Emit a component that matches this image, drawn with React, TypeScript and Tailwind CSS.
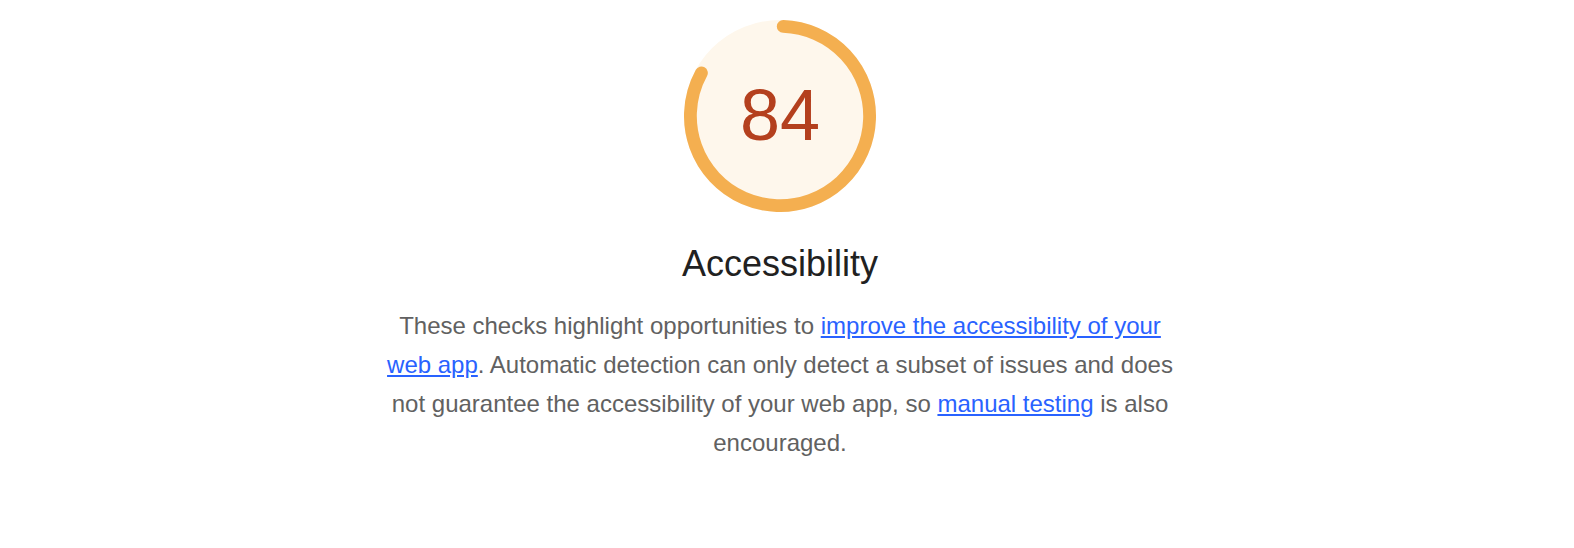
import React from 'react'

const RADIUS = 56
const STROKE = 8

function ScoreGauge({ score }: { score: number }) {
  const circumference = 2 * Math.PI * RADIUS
  // leave a small gap so the round caps don't touch
  const length = Math.max(score * circumference - 0.75 * STROKE, 0)
  const rotate = -90 + ((0.25 * STROKE) / circumference) * 360

  return (
    <div className="relative h-[192px] w-[192px]">
      <svg viewBox="0 0 120 120" className="h-full w-full">
        <circle cx="60" cy="60" r={RADIUS} fill="#fef7ec" stroke="#fef7ec" strokeWidth={STROKE} />
        <circle
          cx="60"
          cy="60"
          r={RADIUS}
          fill="none"
          stroke="#f4af50"
          strokeWidth={STROKE}
          strokeLinecap="round"
          strokeDasharray={`${length} ${circumference}`}
          style={{ transform: `rotate(${rotate}deg)`, transformOrigin: '60px 60px' }}
        />
      </svg>
      <div className="absolute inset-0 flex items-center justify-center pb-[2px] text-[72px] leading-none text-[#b4401e]">
        {Math.round(score * 100)}
      </div>
    </div>
  )
}

export default function App() {
  return (
    <div
      className="min-h-[548px] w-full bg-white pr-[14px]"
      style={{ fontFamily: '"Liberation Sans", Arial, Helvetica, sans-serif' }}
    >
      <div className="flex flex-col items-center pt-[20px]">
        <ScoreGauge score={0.84} />

        <h2 className="mt-[30px] text-[36px] leading-[44px] font-normal text-[#212121]">
          Accessibility
        </h2>

        <p className="mt-[20px] max-w-[800px] text-center text-[24px] leading-[39px] text-[#616161]">
          These checks highlight opportunities to{' '}
          <a href="#" className="text-[#2962ff] underline">
            improve the accessibility of your web app
          </a>
          . Automatic detection can only detect a subset of issues and does not guarantee the
          accessibility of your web app, so{' '}
          <a href="#" className="text-[#2962ff] underline">
            manual testing
          </a>{' '}
          is also encouraged.
        </p>
      </div>
    </div>
  )
}
